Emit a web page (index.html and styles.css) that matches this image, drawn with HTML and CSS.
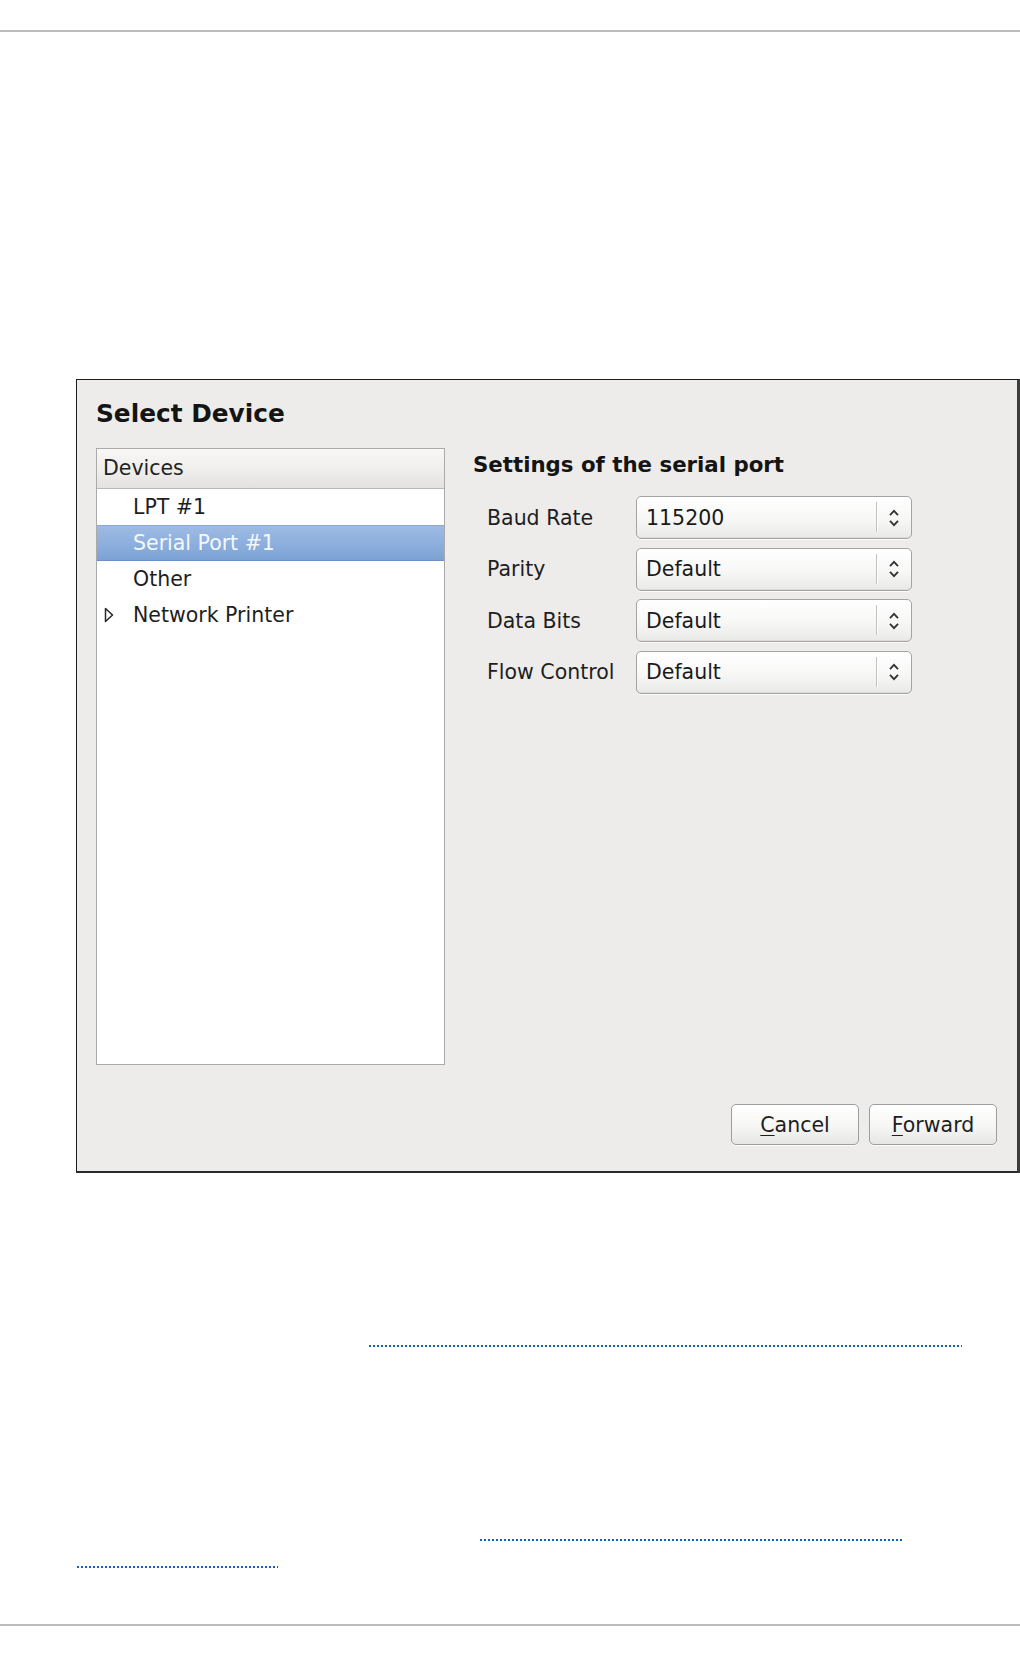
FILE: index.html
```html
<!DOCTYPE html>
<html lang="en">
<head>
<meta charset="utf-8">
<title>Select Device</title>
<link rel="stylesheet" href="styles.css">
</head>
<body>
<div class="page">
  <div class="rule rule-top"></div>

  <figure class="figure">
    <div class="dialog">
      <h1 class="dialog-title">Select Device</h1>
      <div class="dialog-body">
        <div class="device-list">
          <div class="list-header">Devices</div>
          <ul class="list-rows">
            <li class="row"><span class="expander"></span><span class="row-text">LPT #1</span></li>
            <li class="row selected"><span class="expander"></span><span class="row-text">Serial Port #1</span></li>
            <li class="row"><span class="expander"></span><span class="row-text">Other</span></li>
            <li class="row"><span class="expander"><svg class="tri" width="10" height="16" viewBox="0 0 10 16"><polygon points="1.5,1.5 8.5,8 1.5,14.5" fill="none" stroke="#262626" stroke-width="1.5" stroke-linejoin="round"/></svg></span><span class="row-text">Network Printer</span></li>
          </ul>
        </div>

        <div class="settings">
          <h2 class="settings-title">Settings of the serial port</h2>
          <div class="settings-grid">
            <span class="field-label">Baud Rate</span>
            <div class="combo"><span class="combo-value">115200</span><span class="combo-sep"></span><span class="combo-arrow"><svg width="14" height="20" viewBox="0 0 14 20"><polyline points="3,7.2 7,2.8 11,7.2" fill="none" stroke="#2e3436" stroke-width="1.8"/><polyline points="3,12.8 7,17.2 11,12.8" fill="none" stroke="#2e3436" stroke-width="1.8"/></svg></span></div>

            <span class="field-label">Parity</span>
            <div class="combo"><span class="combo-value">Default</span><span class="combo-sep"></span><span class="combo-arrow"><svg width="14" height="20" viewBox="0 0 14 20"><polyline points="3,7.2 7,2.8 11,7.2" fill="none" stroke="#2e3436" stroke-width="1.8"/><polyline points="3,12.8 7,17.2 11,12.8" fill="none" stroke="#2e3436" stroke-width="1.8"/></svg></span></div>

            <span class="field-label">Data Bits</span>
            <div class="combo"><span class="combo-value">Default</span><span class="combo-sep"></span><span class="combo-arrow"><svg width="14" height="20" viewBox="0 0 14 20"><polyline points="3,7.2 7,2.8 11,7.2" fill="none" stroke="#2e3436" stroke-width="1.8"/><polyline points="3,12.8 7,17.2 11,12.8" fill="none" stroke="#2e3436" stroke-width="1.8"/></svg></span></div>

            <span class="field-label">Flow Control</span>
            <div class="combo"><span class="combo-value">Default</span><span class="combo-sep"></span><span class="combo-arrow"><svg width="14" height="20" viewBox="0 0 14 20"><polyline points="3,7.2 7,2.8 11,7.2" fill="none" stroke="#2e3436" stroke-width="1.8"/><polyline points="3,12.8 7,17.2 11,12.8" fill="none" stroke="#2e3436" stroke-width="1.8"/></svg></span></div>
          </div>
        </div>
      </div>

      <div class="dialog-actions">
        <button class="btn" type="button"><u>C</u>ancel</button>
        <button class="btn" type="button"><u>F</u>orward</button>
      </div>
    </div>
  </figure>

  <p class="para para-1"><a class="xref xref-1"></a></p>
  <p class="para para-2"><a class="xref xref-2"></a></p>
  <p class="para para-3"><a class="xref xref-3"></a></p>

  <div class="rule rule-bottom"></div>
</div>
</body>
</html>
```

FILE: styles.css
```css
* {
  box-sizing: border-box;
}

html, body {
  margin: 0;
  padding: 0;
  background: #ffffff;
}

body {
  font-family: "DejaVu Sans", "Liberation Sans", sans-serif;
  color: #1c1c1c;
}

.page {
  width: 1020px;
  padding-top: 30px;
}

.rule {
  height: 2px;
  background: #bcbcbc;
}

/* ---------- dialog figure ---------- */

.figure {
  margin: 347px 0 0 76px;
  padding: 0;
}

.dialog {
  width: 944px;
  height: 794px;
  background: #edecea;
  border-top: 1px solid #1c1c1c;
  border-left: 1px solid #1c1c1c;
  border-right: 3px solid #3d3d3d;
  border-bottom: 2px solid #2a2a2a;
  padding: 19px 20px 26px 19px;
  display: flex;
  flex-direction: column;
}

.dialog-title {
  margin: 0;
  font-size: 24.8px;
  line-height: 30px;
  font-weight: bold;
  color: #141414;
}

.dialog-body {
  margin-top: 19px;
  display: flex;
  gap: 28px;
}

/* ---------- device list ---------- */

.device-list {
  width: 349px;
  height: 617px;
  border: 1px solid #aaaaaa;
  background: #ffffff;
  display: flex;
  flex-direction: column;
}

.list-header {
  height: 40px;
  padding-left: 6px;
  font-size: 20.5px;
  line-height: 39px;
  color: #222222;
  background: linear-gradient(to bottom, #f8f7f6 0%, #efeeec 55%, #e3e2e0 100%);
  border-bottom: 1px solid #b9b9b9;
}

.list-rows {
  list-style: none;
  margin: 0;
  padding: 0;
}

.row {
  height: 36px;
  display: flex;
  align-items: center;
  font-size: 20.5px;
  color: #1e1e1e;
}

.row.selected {
  color: #f4f7fb;
  background: linear-gradient(to bottom, #9dbbe3 0%, #8eb0de 50%, #7ca2d4 100%);
  border-top: 1px solid #8aaad6;
  border-bottom: 1px solid #6c90c3;
}

.expander {
  width: 36px;
  flex: none;
  display: flex;
  align-items: center;
  padding-left: 7px;
}

.tri {
  display: block;
}

/* ---------- settings panel ---------- */

.settings {
  flex: 1;
}

.settings-title {
  margin: 0;
  font-size: 21.3px;
  line-height: 33px;
  font-weight: bold;
  color: #141414;
}

.settings-grid {
  margin: 15px 0 0 14px;
  display: grid;
  grid-template-columns: 149px 276px;
  grid-auto-rows: 43px;
  row-gap: 8.6px;
  align-items: center;
}

.field-label {
  font-size: 20.5px;
  color: #1e1e1e;
}

.combo {
  height: 43px;
  display: flex;
  align-items: center;
  border: 1px solid #a4a4a4;
  border-radius: 5px;
  background: linear-gradient(to bottom, #ffffff 0%, #f7f7f6 55%, #e9e9e8 100%);
  box-shadow: 0 1px 0 rgba(255, 255, 255, 0.8), inset 0 -1px 0 #dcdcdb;
}

.combo-value {
  flex: 1;
  padding-left: 9px;
  font-size: 20.5px;
  color: #1a1a1a;
}

.combo-sep {
  align-self: stretch;
  width: 2px;
  margin: 5px 0 6px;
  border-left: 1px solid #c2c2c2;
  border-right: 1px solid #ffffff;
}

.combo-arrow {
  width: 33px;
  padding-right: 2px;
  display: flex;
  align-items: center;
  justify-content: center;
}

.combo-arrow svg {
  display: block;
}

/* ---------- buttons ---------- */

.dialog-actions {
  margin-top: auto;
  display: flex;
  justify-content: flex-end;
  gap: 10px;
}

.btn {
  appearance: none;
  width: 128px;
  height: 41px;
  margin: 0;
  padding: 0;
  font-family: "DejaVu Sans", "Liberation Sans", sans-serif;
  font-size: 20.5px;
  color: #1e1e1e;
  border: 1px solid #9d9d9d;
  border-radius: 5px;
  background: linear-gradient(to bottom, #ffffff 0%, #f6f6f5 55%, #e6e6e4 100%);
  box-shadow: 0 1px 0 rgba(255, 255, 255, 0.8);
}

.btn u {
  text-underline-offset: 3px;
  text-decoration-thickness: 1px;
}

/* ---------- text with cross references ---------- */

.para {
  margin: 0;
  height: 2px;
}

.para-1 {
  margin-top: 172px;
}

.para-2 {
  margin-top: 192px;
}

.para-3 {
  margin-top: 25px;
}

.xref {
  display: block;
  height: 2px;
  background: repeating-linear-gradient(to right, #0a64cc 0 2px, transparent 2px 4px);
}

.xref-1 {
  margin-left: 369px;
  width: 593px;
}

.xref-2 {
  margin-left: 480px;
  width: 422px;
}

.xref-3 {
  margin-left: 77px;
  width: 201px;
}

.rule-bottom {
  margin-top: 56px;
}
```
